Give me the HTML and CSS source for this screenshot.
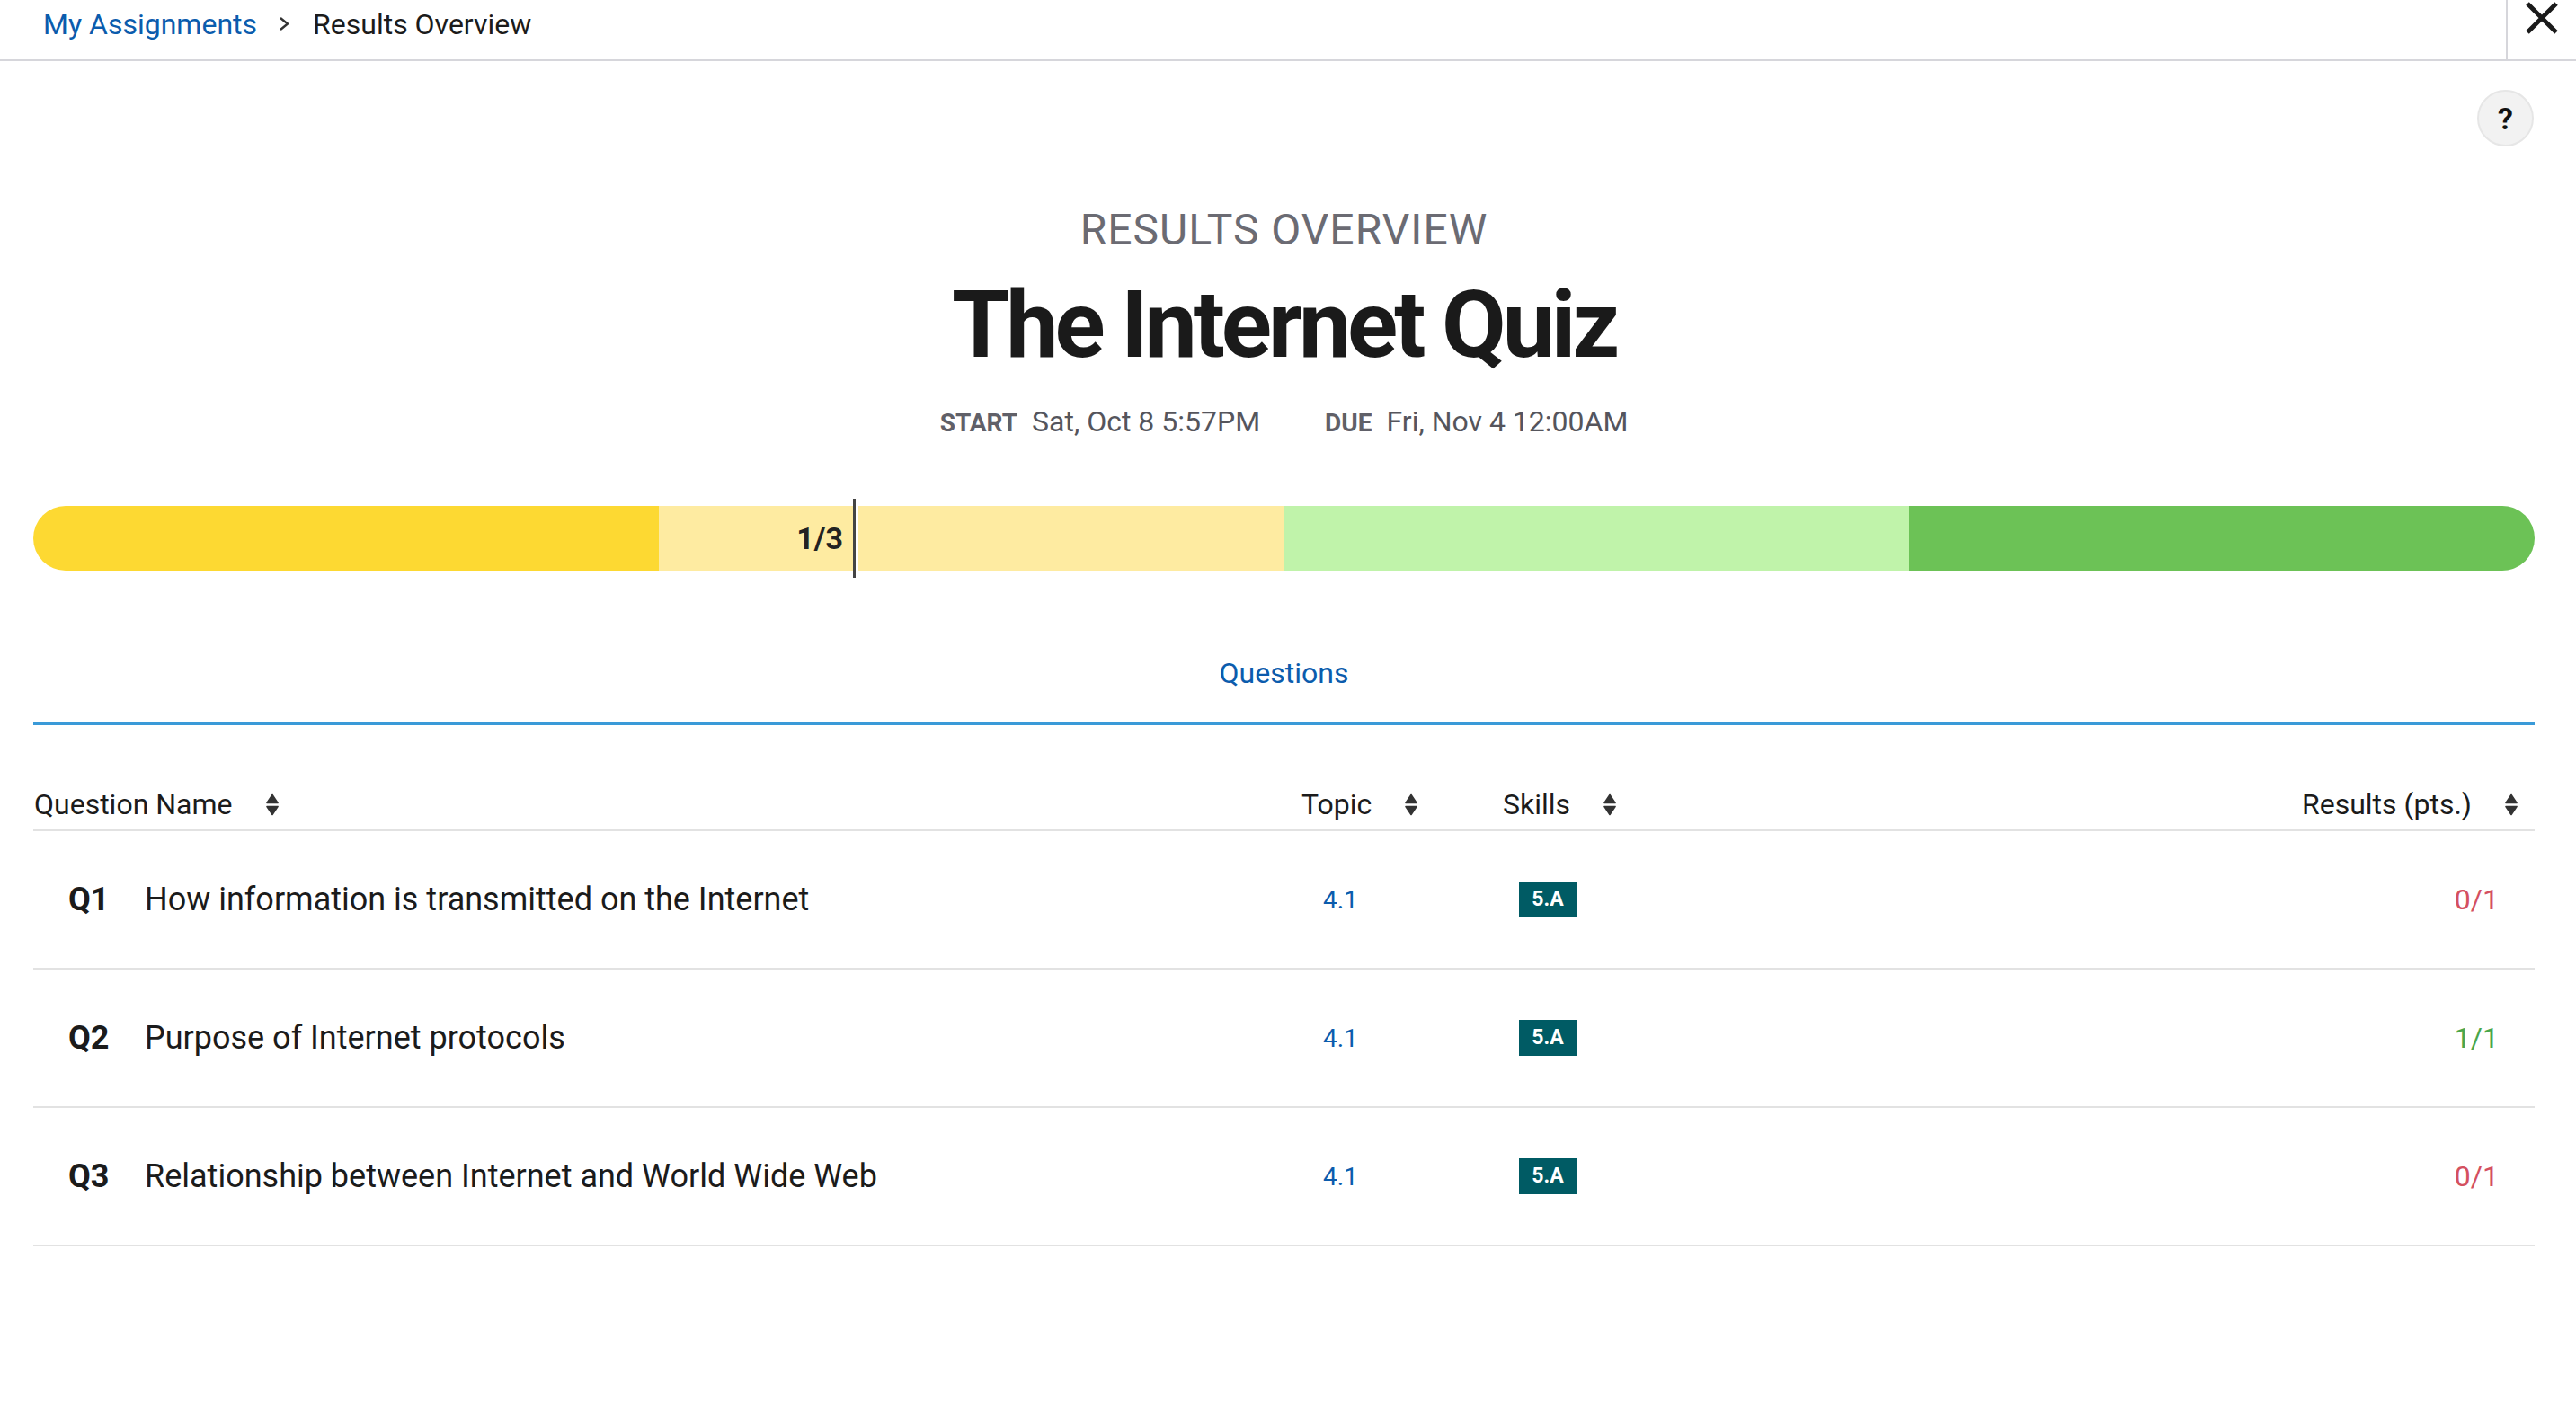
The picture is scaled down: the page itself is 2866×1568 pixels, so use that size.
FILE: index.html
```html
<!DOCTYPE html>
<html lang="en">
<head>
<meta charset="utf-8">
<title>Results Overview</title>
<link rel="stylesheet" href="styles.css">
</head>
<body>
<header class="topbar">
  <nav class="breadcrumb">
    <a class="crumb-link" href="#">My Assignments</a>
    <svg class="chev" viewBox="0 0 12 17" width="12" height="17"><polyline points="2,2 10,8.5 2,15" fill="none" stroke="#333" stroke-width="2.4"/></svg>
    <span class="crumb-current">Results Overview</span>
  </nav>
  <button class="close" aria-label="Close">
    <svg viewBox="0 0 36 36" width="36" height="36"><path d="M2 2 L34 34 M34 2 L2 34" stroke="#1a1a1a" stroke-width="5" fill="none"/></svg>
  </button>
</header>
<main class="main">
  <div class="help-row"><button class="help">?</button></div>
  <div class="kicker">RESULTS OVERVIEW</div>
  <h1 class="title">The Internet Quiz</h1>
  <div class="dates">
    <span class="date-label">START</span><span class="date-val">Sat, Oct 8 5:57PM</span>
    <span class="date-label due">DUE</span><span class="date-val">Fri, Nov 4 12:00AM</span>
  </div>
  <div class="progress">
    <div class="seg seg1"></div>
    <div class="seg seg2"></div>
    <div class="seg seg3"></div>
    <div class="seg seg4"></div>
    <div class="marker" style="left: 912px"><span class="marker-label">1/3</span></div>
  </div>
  <div class="tabs"><span class="tab">Questions</span></div>
  <div class="table">
    <div class="thead">
      <div class="th th-name">Question Name <svg class="sort" viewBox="0 0 14 25" width="14" height="25"><path d="M7 1.5 L13 10.5 H1 Z M7 23.5 L13 14.5 H1 Z" fill="#333" stroke="#333" stroke-width="1.6" stroke-linejoin="round"/></svg></div>
      <div class="th th-topic">Topic <svg class="sort" viewBox="0 0 14 25" width="14" height="25"><path d="M7 1.5 L13 10.5 H1 Z M7 23.5 L13 14.5 H1 Z" fill="#333" stroke="#333" stroke-width="1.6" stroke-linejoin="round"/></svg></div>
      <div class="th th-skills">Skills <svg class="sort" viewBox="0 0 14 25" width="14" height="25"><path d="M7 1.5 L13 10.5 H1 Z M7 23.5 L13 14.5 H1 Z" fill="#333" stroke="#333" stroke-width="1.6" stroke-linejoin="round"/></svg></div>
      <div class="th th-results">Results (pts.) <svg class="sort" viewBox="0 0 14 25" width="14" height="25"><path d="M7 1.5 L13 10.5 H1 Z M7 23.5 L13 14.5 H1 Z" fill="#333" stroke="#333" stroke-width="1.6" stroke-linejoin="round"/></svg></div>
    </div>
    <div class="row">
      <div class="td td-name"><span class="qnum">Q1</span><span class="qtext">How information is transmitted on the Internet</span></div>
      <div class="td td-topic"><a class="topic" href="#">4.1</a></div>
      <div class="td td-skills"><span class="badge">5.A</span></div>
      <div class="td td-results"><span class="score wrong">0/1</span></div>
    </div>
    <div class="row">
      <div class="td td-name"><span class="qnum">Q2</span><span class="qtext">Purpose of Internet protocols</span></div>
      <div class="td td-topic"><a class="topic" href="#">4.1</a></div>
      <div class="td td-skills"><span class="badge">5.A</span></div>
      <div class="td td-results"><span class="score right">1/1</span></div>
    </div>
    <div class="row">
      <div class="td td-name"><span class="qnum">Q3</span><span class="qtext">Relationship between Internet and World Wide Web</span></div>
      <div class="td td-topic"><a class="topic" href="#">4.1</a></div>
      <div class="td td-skills"><span class="badge">5.A</span></div>
      <div class="td td-results"><span class="score wrong">0/1</span></div>
    </div>
  </div>
</main>
</body>
</html>
```

FILE: styles.css
```css
* { box-sizing: border-box; }
html, body { margin: 0; padding: 0; background: #fff; }
body {
  font-family: Roboto, "Liberation Sans", Arial, sans-serif;
  color: #1b1b1b;
}

.topbar {
  display: flex;
  height: 68px;
  border-bottom: 2px solid #d6d6db;
}
.breadcrumb {
  flex: 1;
  display: flex;
  align-items: flex-start;
  padding: 7px 0 0 48px;
  font-size: 32px;
  line-height: 40px;
}
.crumb-link { color: #0b5cad; text-decoration: none; }
.chev { margin: 11px 26px 0 24px; }
.crumb-current { color: #1b1b1b; }
.close {
  width: 78px;
  border: 0;
  border-left: 2px solid #d6d6db;
  background: #fff;
  padding: 2px 0 0 0;
  display: flex;
  justify-content: center;
  align-items: flex-start;
}

.main { padding: 0 46px 0 37px; }
.help-row {
  display: flex;
  justify-content: flex-end;
  padding-top: 32px;
  margin-right: 1px;
}
.help {
  width: 63px;
  height: 63px;
  border-radius: 50%;
  border: 2px solid #e6e6e6;
  background: #f2f2f2;
  font-family: Roboto, sans-serif;
  font-weight: 700;
  font-size: 34px;
  line-height: 1;
  color: #111;
  padding: 0;
}

.kicker {
  margin-top: 65px;
  text-align: center;
  font-size: 48px;
  line-height: 56px;
  letter-spacing: 1px;
  color: #6b6b73;
}
.title {
  margin: 18px 0 0;
  text-align: center;
  font-size: 104px;
  line-height: 120px;
  font-weight: 700;
  letter-spacing: -4.1px;
  color: #1a1a1a;
}
.dates {
  margin-top: 27px;
  display: flex;
  justify-content: center;
  align-items: baseline;
  line-height: 40px;
}
.date-label {
  font-size: 28px;
  font-weight: 700;
  color: #606068;
  margin-right: 16px;
}
.date-label.due { margin-left: 72px; }
.date-val { font-size: 32px; color: #55555c; }

.progress {
  position: relative;
  margin-top: 72px;
  height: 72px;
  display: flex;
}
.seg { flex: 1; }
.seg1 { background: #fdd932; border-radius: 36px 0 0 36px; }
.seg2 { background: #feeba1; }
.seg3 { background: #c0f3aa; }
.seg4 { background: #6cc256; border-radius: 0 36px 36px 0; }
.marker {
  position: absolute;
  top: -8px;
  height: 88px;
  width: 3px;
  background: #444;
  box-shadow: 3px 0 0 0 #fff;
}
.marker-label {
  position: absolute;
  right: 14px;
  top: 22px;
  font-size: 34px;
  line-height: 44px;
  font-weight: 700;
  color: #222;
}

.tabs {
  margin-top: 94px;
  text-align: center;
  border-bottom: 3px solid #3a9ad8;
  padding-bottom: 35px;
  font-size: 32px;
  line-height: 40px;
}
.tab { color: #0b5cad; }

.thead, .row {
  display: grid;
  grid-template-columns: 1411px 224px 1fr auto;
  align-items: center;
}
.thead {
  padding-top: 68px;
  padding-bottom: 8px;
  border-bottom: 2px solid #e2e2e2;
  font-size: 32px;
  line-height: 40px;
}
.th { display: flex; align-items: center; }
.sort { margin-left: 37px; }
.th-name { padding-left: 1px; }
.th-results { padding-right: 19px; justify-self: end; }

.row {
  height: 154px;
  border-bottom: 2px solid #e2e2e2;
}
.td-name { display: flex; align-items: baseline; padding-left: 39px; }
.qnum { width: 85px; font-weight: 700; font-size: 36px; }
.qtext { font-size: 36px; }
.td-topic { padding-left: 24px; }
.topic { color: #0b5cad; text-decoration: none; font-size: 28px; }
.td-skills { padding-left: 18px; }
.badge {
  display: inline-block;
  width: 64px;
  height: 40px;
  line-height: 40px;
  text-align: center;
  background: #005b64;
  color: #fff;
  font-weight: 700;
  font-size: 23px;
}
.td-results { justify-self: end; padding-right: 40px; }
.score { font-size: 32px; }
.score.wrong { color: #d4505f; }
.score.right { color: #4aa64a; }
```
